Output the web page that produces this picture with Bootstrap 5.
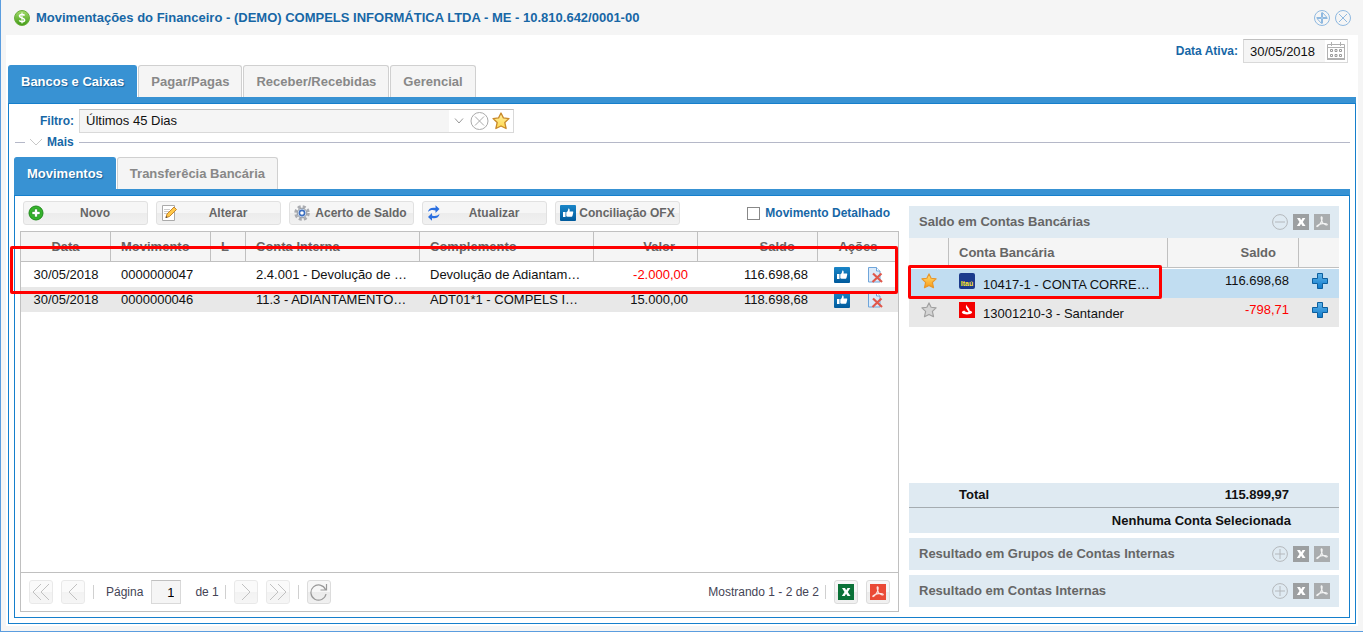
<!DOCTYPE html>
<html lang="pt-BR">
<head>
<meta charset="utf-8">
<meta name="viewport" content="width=device-width, initial-scale=1">
<title>Movimentações do Financeiro</title>
<link href="https://cdn.jsdelivr.net/npm/bootstrap@5.3.0/dist/css/bootstrap.min.css" rel="stylesheet">
<style>
  :root { --blue: #3892d3; --line: #157fcc; --navy: #1767a6; --soft: #dfeaf2; --rule: #c0c0c0; }
  body { font-family: "Liberation Sans", Arial, sans-serif; font-size: 13px; line-height: 16px; color: #111; }
  svg { display: block; flex: none; }
  button { font-family: inherit; }
  .window-frame { background: #f5f5f5; border: solid #5b9ddf; border-width: 0 0 1px 1px; padding: 0 5px 5px; }
  .window-title { height: 35px; padding: 0 7px 0 8px; gap: 6px; }
  .window-title h1 { font-size: 13px; line-height: 16px; color: var(--navy); }
  .window-tools { gap: 5px; }
  .plain-btn { background: none; border: 0; padding: 0; }
  .window-body { background: #fff; padding: 4px 2px 2px; }
  .field-label { color: var(--navy); font-weight: bold; font-size: 12px; }
  .field-row { gap: 5px; }
  .field-box { height: 24px; border: 1px solid #d9d9d9; border-top-color: #c0c0c0; background: #fff; }
  .field-box input, .field-box select { appearance: none; border: 0; background: #f5f5f5; height: 22px; padding: 0 6px; color: #111; border-radius: 0; outline: 0; }
  .date-row { padding-right: 8px; margin-bottom: 2px; }
  .date-row input { width: 81px; }
  .date-row .plain-btn { padding: 0 2px; }
  .filter-label { width: 60px; }
  .filter-box { width: 435px; padding-right: 3px; }
  .filter-box .arrow { margin: 0 6px 0 5px; }
  .filter-box .plain-btn + .plain-btn { margin-left: 3px; }

  .tab-strip { border-bottom: 6px solid var(--blue); gap: 1px; }
  .tab-strip .nav-link { height: 32px; padding: 0 12px; border: 1px solid #d0d0d0; border-bottom: 0; border-radius: 3px 3px 0 0; background: #f5f5f5; color: #888; font-weight: bold; line-height: 31px; }
  .tab-strip .nav-link.active { background: var(--blue); border-color: var(--blue); color: #fff; text-shadow: 1px 1px 1px #1a5f96; }
  .tab-panel { border: 1px solid var(--line); padding: 5px; }
  .more-row { height: 16px; margin: 1px 0 7px 1px; gap: 5px; }
  .more-row hr { margin: 0; border-top: 1px solid #b5b8c8; opacity: 1; }
  .more-row hr:first-child { width: 10px; }

  .panes { gap: 5px; }
  .left-pane { flex: 879 1 0; min-width: 0; }
  .right-pane { flex: 430 1 0; min-width: 0; padding: 10px 5px 5px; }
  .tool-bar { padding: 5px 9px 6px 3px; gap: 8px; }
  .tool-btn { width: 125px; height: 24px; padding: 0 3px 0 4px; gap: 2px; border: 1px solid #e1e1e1; border-radius: 3px; background: linear-gradient(#f6f6f6 0 50%, #ececec 50%, #f1f1f1); color: #666; font-weight: bold; font-size: 12px; line-height: 16px; }
  .tool-bar .form-check-input { width: 13px; height: 13px; margin: 0; border: 1px solid #888; border-radius: 0; }
  .detail-check { gap: 5px; }

  .grid-frame { border: 1px solid var(--rule); }
  .data-grid { table-layout: fixed; width: 100%; border-collapse: separate; border-spacing: 0; }
  .data-grid th { height: 30px; padding: 0 10px; background: #f5f5f5; color: #666; border-bottom: 1px solid var(--rule); border-right: 1px solid var(--rule); }
  .data-grid th:last-child { border-right: 0; }
  .data-grid th.text-end { padding-right: 22px; }
  .data-grid td { height: 25px; padding: 1px 10px 0; overflow: hidden; text-overflow: ellipsis; white-space: nowrap; }
  .data-grid tbody tr:nth-child(even) td { background: #e8e8e8; }
  .negative { color: #f00; }
  .row-actions { gap: 17px; }
  .mark-box { position: absolute; border: 3px solid #f00; border-radius: 2px; pointer-events: none; }
  .mark-row { left: -11px; right: 0; top: 14px; height: 48px; }
  .mark-account { left: -1px; right: 177px; top: 27px; height: 34px; }

  .pager { height: 39px; border-top: 1px solid var(--rule); padding: 0 8px; font-size: 12px; color: #445; }
  .pager label { margin: 0 8px 0 12px; }
  .pager .page-count { margin: 0 6px 0 14px; }
  .pager .page-info { margin-right: 6px; }
  .pager-btn { width: 24px; height: 24px; padding: 0; border: 1px solid #dcdcdc; border-radius: 3px; background: linear-gradient(#f7f7f7 0 50%, #ebebeb 50%, #f1f1f1); display: flex; align-items: center; justify-content: center; }
  .pager-btn:disabled { opacity: .6; }
  .pager-rule { width: 1px; height: 14px; background: #d0d0d0; }
  .page-box { width: 30px; height: 24px; border: 1px solid #d9d9d9; border-top-color: #c0c0c0; background: #f5f5f5; text-align: right; padding: 0 6px; font-size: 13px; border-radius: 0; }

  .side-head { background: var(--soft); height: 32px; padding: 0 9px 0 10px; color: #666; gap: 5px; }
  .side-head + .side-head { margin-top: 5px; }
  .side-head h2 { font-size: 13px; line-height: 16px; }
  .side-grid td { height: 29px; padding-top: 4px; vertical-align: top; }
  .side-grid tr:first-child td { height: 30px; border-top: 1px solid #fff; }
  .side-grid td.picked { background: #c1ddf1; }
  .side-grid td:first-child, .side-grid td:last-child { padding: 4px 12px 0; }
  .side-grid td:last-child { padding-left: 13px; padding-right: 10px; }
  .side-grid td:nth-child(2) svg { display: inline-block; margin-right: 8px; vertical-align: baseline; }
  .side-total { background: var(--soft); height: 25px; padding: 0 50px; border-bottom: 1px solid #a5acb1; }
  .side-picked { background: var(--soft); height: 25px; padding: 0 48px; margin-bottom: 5px; }
</style>
</head>
<body>

<svg width="0" height="0" class="position-absolute" aria-hidden="true">
  <defs>
    <linearGradient id="gGreen" x1="0" y1="0" x2="0" y2="1"><stop offset="0" stop-color="#a5dc6c"/><stop offset="1" stop-color="#3f9a14"/></linearGradient>
    <linearGradient id="gStar" x1="0" y1="0" x2="0" y2="1"><stop offset="0" stop-color="#fff0a0"/><stop offset="1" stop-color="#ffd84e"/></linearGradient>
    <linearGradient id="gGold" x1="0" y1="0" x2="0" y2="1"><stop offset="0" stop-color="#ffe27a"/><stop offset="1" stop-color="#f99a12"/></linearGradient>
    <linearGradient id="gPlus" x1="0" y1="0" x2="0" y2="1"><stop offset="0" stop-color="#5fb4ea"/><stop offset="1" stop-color="#0f7acb"/></linearGradient>
    <linearGradient id="gThumb" x1="0" y1="0" x2="0" y2="1"><stop offset="0" stop-color="#1a86c8"/><stop offset="1" stop-color="#005a9c"/></linearGradient>
    <symbol id="xls" viewBox="0 0 16 16"><path fill="currentColor" d="M0 0h16v16H0z"/><path fill="#fff" d="M4 4h3l1.200 2.200L9.500 4h2.800L9.800 7.900l2.700 4.100h-3L8.100 9.700 6.700 12H3.800l2.700-4.100z"/></symbol>
    <symbol id="pdf" viewBox="0 0 16 16"><path fill="currentColor" d="M0 0h16v16H0z"/><path fill="none" stroke="#fff" stroke-opacity=".85" stroke-width="1.100" d="M7.300 2.800c1.200-.4 1 2 .5 3.700C7.200 8.700 4.300 12.700 3 12.600c-1-.4 1.200-2 4-2.700 2.600-.6 6.200-.5 6.300.6 0 1.200-3.200.2-4.500-1.700C7.500 6.700 6.700 3.500 7.300 2.800z"/></symbol>
    <symbol id="thumb" viewBox="0 0 16 16"><rect width="16" height="16" rx="1" fill="url(#gThumb)"/><path fill="#fff" d="M3 7h2.500v5H3zM6.300 7.200c1.500-.5 1.800-2 2-3.700 1.500-.2 1.600 1.700 1.200 3H13c.6.500.3 1.200-.1 1.500.4.500.2 1.100-.2 1.400.3.500.1 1-.4 1.300.1.500-.1 1-.6 1.100H7.500l-1.200-.5z"/></symbol>
    <symbol id="del" viewBox="0 0 16 16"><path fill="#dcebfa" stroke="#6fa5da" d="M1.500.5h8l3.500 3.500v11H1.500z"/><path fill="#fff" stroke="#6fa5da" d="M9.500.5V4H13"/><path stroke="#e0584c" stroke-width="2.200" d="M6 6.500l9 8.500M14.500 6.500L5.500 15"/></symbol>
    <symbol id="starShape" viewBox="0 0 18 18"><path stroke-width="1.300" stroke-linejoin="round" d="M9 1l2.400 4.900 5.600.7-4.200 3.900 1.300 6L9 14l-5.100 2.500 1.300-6L1 6.600l5.600-.7z"/></symbol>
    <symbol id="plus" viewBox="0 0 16 16"><path fill="url(#gPlus)" stroke="#0c5f9e" d="M5.500.5h5v5h5v5h-5v5h-5v-5h-5v-5h5z"/></symbol>
    <symbol id="ringMinus" viewBox="0 0 16 16"><g fill="none" stroke="#b4b8bc"><circle cx="8" cy="8" r="7.400"/><path d="M3 8h10"/></g></symbol>
    <symbol id="ringPlus" viewBox="0 0 16 16"><g fill="none" stroke="#b4b8bc"><circle cx="8" cy="8" r="7.400"/><path d="M3 8h10M8 3v10"/></g></symbol>
  </defs>
</svg>

<div class="window-frame d-flex flex-column min-vh-100">
  <header class="window-title d-flex align-items-center">
    <svg width="16" height="16" viewBox="0 0 16 16"><circle cx="8" cy="8" r="7.500" fill="url(#gGreen)" stroke="#6aae3c"/><path fill="none" stroke="#fff" stroke-width="1.600" d="M10.600 5.500C9.500 4 5.500 4 5.500 6c0 2.400 5.100 1.500 5.100 3.900 0 2.200-4.100 2.200-5.300.5"/><path stroke="#fff" d="M8 2.500v11"/></svg>
    <h1 class="fw-bold mb-0 flex-grow-1">Movimentações do Financeiro - (DEMO) COMPELS INFORMÁTICA LTDA - ME - 10.810.642/0001-00</h1>
    <div class="window-tools d-flex">
      <button class="plain-btn" aria-label="Restaurar"><svg width="16" height="16" viewBox="0 0 16 16" fill="none" stroke="#8fb9e0"><circle cx="8" cy="8" r="7.500"/><path d="M8.500 2.500v5H13zM7.500 13.500v-5H3zM2.500 7.500h5v-5M13.500 8.500h-5v5"/></svg></button>
      <button class="plain-btn" aria-label="Fechar"><svg width="16" height="16" viewBox="0 0 16 16" fill="none" stroke="#8fb9e0"><circle cx="8" cy="8" r="7.500"/><path d="M4 4l8 8M12 4l-8 8"/></svg></button>
    </div>
  </header>

  <main class="window-body flex-grow-1 d-flex flex-column">
    <div class="date-row field-row d-flex justify-content-end align-items-center">
      <label class="field-label" for="activeDate">Data Ativa:</label>
      <div class="field-box d-flex align-items-center">
        <input id="activeDate" type="text" value="30/05/2018">
        <button class="plain-btn" aria-label="Abrir calendário"><svg width="18" height="18" viewBox="0 0 18 18"><path fill="none" stroke="#b0b0b0" d="M.5 2.500h17v15H.5zM.5 5.500h17M4.500 0v4M13.500 0v4"/><path stroke="#b0b0b0" stroke-width="2" d="M0 17h18"/><path fill="none" stroke="#9a9a9a" d="M3.500 7.500h2v2h-2zM8 7.500h2v2H8zM12.500 7.500h2v2h-2zM3.500 12.500h2v2h-2zM8 12.500h2v2H8zM12.500 12.500h2v2h-2z"/></svg></button>
      </div>
    </div>

    <nav class="nav tab-strip">
      <a class="nav-link active" href="#">Bancos e Caixas</a>
      <a class="nav-link" href="#">Pagar/Pagas</a>
      <a class="nav-link" href="#">Receber/Recebidas</a>
      <a class="nav-link" href="#">Gerencial</a>
    </nav>

    <section class="tab-panel flex-grow-1 d-flex flex-column">
      <div class="field-row d-flex align-items-center">
        <label class="field-label filter-label text-end" for="periodFilter">Filtro:</label>
        <div class="field-box filter-box d-flex align-items-center">
          <select id="periodFilter" class="flex-grow-1"><option>Últimos 45 Dias</option></select>
          <svg class="arrow" width="10" height="6" viewBox="0 0 10 6" fill="none" stroke="#999"><path d="M1 .5l4 4.500L9 .5"/></svg>
          <button class="plain-btn" aria-label="Limpar filtro"><svg width="19" height="18" viewBox="0 0 19 18" fill="none" stroke="#aaa"><circle cx="9.500" cy="9" r="8.500"/><path d="M5 4.500l9 9M14 4.500l-9 9"/></svg></button>
          <button class="plain-btn" aria-label="Favorito"><svg width="18" height="18" fill="url(#gStar)" stroke="#c98a2b"><use href="#starShape"/></svg></button>
        </div>
      </div>

      <div class="more-row d-flex align-items-center">
        <hr>
        <svg width="12" height="8" viewBox="0 0 12 8" fill="none" stroke="#c8c8c8"><path d="M0 1l6 6 6-6"/></svg>
        <a class="field-label text-decoration-none" href="#">Mais</a>
        <hr class="flex-grow-1">
      </div>

      <nav class="nav tab-strip">
        <a class="nav-link active" href="#">Movimentos</a>
        <a class="nav-link" href="#">Transferêcia Bancária</a>
      </nav>

      <div class="tab-panel panes pt-0 flex-grow-1 d-flex">
        <div class="left-pane d-flex flex-column">
          <div class="tool-bar d-flex align-items-center">
            <button class="tool-btn d-flex align-items-center"><svg width="16" height="16" viewBox="0 0 16 16"><circle cx="8" cy="8" r="7" fill="#35b32c" stroke="#1f8a1b"/><path fill="#fff" stroke="#1f8a1b" stroke-width=".6" d="M6.500 4h3v2.500H12v3H9.500V12h-3V9.500H4v-3h2.500z"/></svg><span class="flex-grow-1">Novo</span></button>
            <button class="tool-btn d-flex align-items-center"><svg width="16" height="16" viewBox="0 0 16 16"><path fill="#fff" stroke="#aaa" d="M1.500.5h12v15h-12z"/><path stroke="#ccc" d="M3 4.500h6M3 6.500h5M3 8.500h3"/><path fill="#ffc94a" stroke="#c7852c" d="M5 12.500l1-3.500 7-7 2.500 2.500-7 7z"/><path fill="#444" d="M4.500 13l.6-1.900 1.400 1.300z"/></svg><span class="flex-grow-1">Alterar</span></button>
            <button class="tool-btn d-flex align-items-center"><svg width="16" height="16" viewBox="0 0 16 16"><circle cx="8" cy="8" r="6.500" fill="none" stroke="#a9abb0" stroke-width="2.600" stroke-dasharray="3 2.100"/><circle cx="8" cy="8" r="4.800" fill="#dfe5ee" stroke="#8f969f"/><circle cx="8" cy="8" r="2.600" fill="#fff" stroke="#3c6fc0" stroke-width="1.600"/></svg><span class="flex-grow-1">Acerto de Saldo</span></button>
            <button class="tool-btn d-flex align-items-center"><svg width="16" height="16" viewBox="0 0 16 16" fill="#2a6fe0"><path d="M1 7c.3-3.500 4-5 7.500-4V.3L12.500 4 8.500 8V5.600C5.800 4.600 3.200 5 1 7z"/><path d="M12.500 9c-.3 3.500-4 5-7.500 4v2.700L1 12l4-4v2.400c2.700 1 5.300.6 7.500-1.400z"/></svg><span class="flex-grow-1">Atualizar</span></button>
            <button class="tool-btn d-flex align-items-center"><svg width="16" height="16"><use href="#thumb"/></svg><span class="flex-grow-1 text-nowrap">Conciliação OFX</span></button>
            <div class="detail-check d-flex align-items-center ms-auto">
              <input class="form-check-input" type="checkbox" id="detailed">
              <label class="field-label" for="detailed">Movimento Detalhado</label>
            </div>
          </div>

          <div class="grid-frame position-relative flex-grow-1 d-flex flex-column">
            <table class="data-grid">
              <colgroup><col style="width:90px"><col style="width:100px"><col style="width:35px"><col><col><col style="width:104px"><col style="width:120px"><col style="width:80px"></colgroup>
              <thead><tr><th class="text-center">Data</th><th>Movimento</th><th>L</th><th>Conta Interna</th><th>Complemento</th><th class="text-end">Valor</th><th class="text-end">Saldo</th><th class="text-center">Ações</th></tr></thead>
              <tbody>
                <tr><td class="text-center">30/05/2018</td><td>0000000047</td><td></td><td>2.4.001 - Devolução de …</td><td>Devolução de Adiantam…</td><td class="text-end negative">-2.000,00</td><td class="text-end">116.698,68</td>
                  <td><div class="row-actions d-flex justify-content-center"><button class="plain-btn" aria-label="Conciliar"><svg width="16" height="16"><use href="#thumb"/></svg></button><button class="plain-btn" aria-label="Excluir"><svg width="16" height="16"><use href="#del"/></svg></button></div></td></tr>
                <tr><td class="text-center">30/05/2018</td><td>0000000046</td><td></td><td>11.3 - ADIANTAMENTO…</td><td>ADT01*1 - COMPELS I…</td><td class="text-end">15.000,00</td><td class="text-end">118.698,68</td>
                  <td><div class="row-actions d-flex justify-content-center"><button class="plain-btn" aria-label="Conciliar"><svg width="16" height="16"><use href="#thumb"/></svg></button><button class="plain-btn" aria-label="Excluir"><svg width="16" height="16"><use href="#del"/></svg></button></div></td></tr>
              </tbody>
            </table>
            <div class="mark-box mark-row"></div>

            <footer class="pager mt-auto d-flex align-items-center">
              <div class="d-flex gap-2">
                <button class="pager-btn" disabled aria-label="Primeira página"><svg width="18" height="18" viewBox="0 0 18 18" fill="none" stroke="#999"><path d="M9 1L1 9l8 8M17 1L9 9l8 8"/></svg></button>
                <button class="pager-btn" disabled aria-label="Página anterior"><svg width="18" height="18" viewBox="0 0 18 18" fill="none" stroke="#999"><path d="M13 1L5 9l8 8"/></svg></button>
              </div>
              <span class="pager-rule ms-2"></span>
              <label for="pageNo">Página</label>
              <input id="pageNo" class="page-box" type="text" value="1">
              <span class="page-count">de 1</span>
              <span class="pager-rule"></span>
              <div class="d-flex gap-2 mx-2">
                <button class="pager-btn" disabled aria-label="Próxima página"><svg width="18" height="18" viewBox="0 0 18 18" fill="none" stroke="#999"><path d="M5 1l8 8-8 8"/></svg></button>
                <button class="pager-btn" disabled aria-label="Última página"><svg width="18" height="18" viewBox="0 0 18 18" fill="none" stroke="#999"><path d="M1 1l8 8-8 8M9 1l8 8-8 8"/></svg></button>
              </div>
              <span class="pager-rule me-2"></span>
              <button class="pager-btn" aria-label="Recarregar"><svg width="18" height="18" viewBox="0 0 18 18" fill="none" stroke="#999"><path stroke-width="1.200" d="M16 11a7.600 7.600 0 1 1-.5-4.500M16.500 1v6h-6"/></svg></button>
              <span class="page-info ms-auto">Mostrando 1 - 2 de 2</span>
              <span class="pager-rule"></span>
              <div class="d-flex gap-2 ms-2">
                <button class="pager-btn" aria-label="Exportar Excel"><svg width="16" height="16" color="#0b7238"><use href="#xls"/></svg></button>
                <button class="pager-btn" aria-label="Exportar PDF"><svg width="16" height="16" color="#ea4a36"><use href="#pdf"/></svg></button>
              </div>
            </footer>
          </div>
        </div>

        <aside class="right-pane d-flex flex-column">
          <div class="side-head d-flex align-items-center">
            <h2 class="fw-bold mb-0 flex-grow-1">Saldo em Contas Bancárias</h2>
            <button class="plain-btn" aria-label="Recolher"><svg width="16" height="16"><use href="#ringMinus"/></svg></button>
            <button class="plain-btn" aria-label="Exportar Excel"><svg width="16" height="16" color="#9c9fa1"><use href="#xls"/></svg></button>
            <button class="plain-btn" aria-label="Exportar PDF"><svg width="16" height="16" color="#a9acae"><use href="#pdf"/></svg></button>
          </div>
          <div class="position-relative mb-auto">
            <table class="data-grid side-grid">
              <colgroup><col style="width:40px"><col><col style="width:131px"><col style="width:40px"></colgroup>
              <thead><tr><th></th><th>Conta Bancária</th><th class="text-end">Saldo</th><th></th></tr></thead>
              <tbody>
                <tr><td class="picked"><svg width="16" height="16" fill="url(#gGold)" stroke="#e8962a"><use href="#starShape"/></svg></td>
                  <td class="picked"><svg width="16" height="16" viewBox="0 0 16 16"><rect width="16" height="16" rx="2" fill="#1b3a8c"/><text x="8" y="13" font-size="7" font-weight="bold" fill="#ffe62e" text-anchor="middle">Itaú</text></svg>10417-1 - CONTA CORRE…</td>
                  <td class="picked text-end">116.698,68</td><td class="picked"><button class="plain-btn" aria-label="Adicionar"><svg width="16" height="16"><use href="#plus"/></svg></button></td></tr>
                <tr><td><svg width="16" height="16" fill="#d4d4d4" stroke="#a0a0a0"><use href="#starShape"/></svg></td>
                  <td><svg width="16" height="16" viewBox="0 0 16 16"><path fill="#f40000" d="M0 0h16v16H0z"/><path fill="#fff" d="M7.500 2.500c-.3 2 3.300 3.300 3 6 2 .4 3 1.300 2.500 2.300-1.300 2.300-8.700 2.300-10 0-.5-1 .5-1.900 2.300-2.300.8 1.400 3 1.900 4 1.500C9 8 5.500 5.500 7.500 2.500z"/><path fill="none" stroke="#f40000" stroke-width=".8" d="M6 6c.5 1.800 2.500 2.500 3 4"/></svg>13001210-3 - Santander</td>
                  <td class="text-end negative">-798,71</td><td><button class="plain-btn" aria-label="Adicionar"><svg width="16" height="16"><use href="#plus"/></svg></button></td></tr>
              </tbody>
            </table>
            <div class="mark-box mark-account"></div>
          </div>
          <div class="side-total d-flex align-items-center justify-content-between fw-bold"><span>Total</span><span>115.899,97</span></div>
          <div class="side-picked d-flex align-items-center justify-content-end fw-bold">Nenhuma Conta Selecionada</div>
          <div class="side-head d-flex align-items-center">
            <h2 class="fw-bold mb-0 flex-grow-1">Resultado em Grupos de Contas Internas</h2>
            <button class="plain-btn" aria-label="Expandir"><svg width="16" height="16"><use href="#ringPlus"/></svg></button>
            <button class="plain-btn" aria-label="Exportar Excel"><svg width="16" height="16" color="#9c9fa1"><use href="#xls"/></svg></button>
            <button class="plain-btn" aria-label="Exportar PDF"><svg width="16" height="16" color="#a9acae"><use href="#pdf"/></svg></button>
          </div>
          <div class="side-head d-flex align-items-center">
            <h2 class="fw-bold mb-0 flex-grow-1">Resultado em Contas Internas</h2>
            <button class="plain-btn" aria-label="Expandir"><svg width="16" height="16"><use href="#ringPlus"/></svg></button>
            <button class="plain-btn" aria-label="Exportar Excel"><svg width="16" height="16" color="#9c9fa1"><use href="#xls"/></svg></button>
            <button class="plain-btn" aria-label="Exportar PDF"><svg width="16" height="16" color="#a9acae"><use href="#pdf"/></svg></button>
          </div>
        </aside>
      </div>
    </section>
  </main>
</div>
<script src="https://cdn.jsdelivr.net/npm/bootstrap@5.3.0/dist/js/bootstrap.bundle.min.js"></script>
</body>
</html>
